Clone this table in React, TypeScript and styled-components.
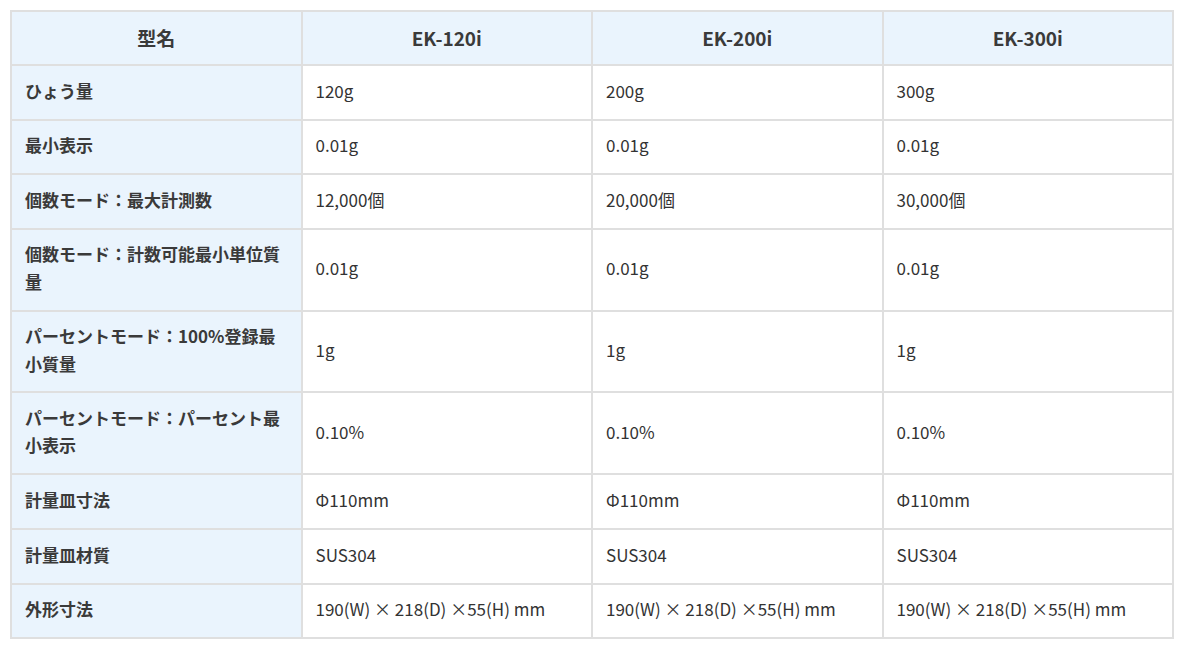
import styled, { createGlobalStyle } from "styled-components";

const GlobalStyle = createGlobalStyle`
  html, body {
    margin: 0;
    padding: 0;
    background: #ffffff;
  }
  body {
    font-family: "Noto Sans CJK JP", "Noto Sans", sans-serif;
    color: #333333;
  }
`;

const MODELS = ["EK-120i", "EK-200i", "EK-300i"];

const ROWS: { label: string; values: string[] }[] = [
  { label: "ひょう量", values: ["120g", "200g", "300g"] },
  { label: "最小表示", values: ["0.01g", "0.01g", "0.01g"] },
  { label: "個数モード：最大計測数", values: ["12,000個", "20,000個", "30,000個"] },
  { label: "個数モード：計数可能最小単位質量", values: ["0.01g", "0.01g", "0.01g"] },
  { label: "パーセントモード：100%登録最小質量", values: ["1g", "1g", "1g"] },
  { label: "パーセントモード：パーセント最小表示", values: ["0.10%", "0.10%", "0.10%"] },
  { label: "計量皿寸法", values: ["Φ110mm", "Φ110mm", "Φ110mm"] },
  { label: "計量皿材質", values: ["SUS304", "SUS304", "SUS304"] },
  {
    label: "外形寸法",
    values: [
      "190(W) × 218(D) ×55(H) mm",
      "190(W) × 218(D) ×55(H) mm",
      "190(W) × 218(D) ×55(H) mm",
    ],
  },
];

const Page = styled.div`
  padding: 10px 0 0 10px;
`;

const SpecTable = styled.table`
  width: 1164px;
  border-collapse: collapse;
  table-layout: fixed;
  border: 2px solid #dfdfdf;
`;

const HeadCell = styled.th`
  background: #eaf4fd;
  border: 2px solid #dfdfdf;
  padding: 12px 13px 13px;
  font-size: 19px;
  line-height: 27px;
  font-weight: 700;
  color: #3a3a3a;
  text-align: center;
`;

const LabelCell = styled.th`
  background: #eaf4fd;
  border: 2px solid #dfdfdf;
  padding: 10.6px 13px 14.7px;
  font-size: 17px;
  line-height: 27.3px;
  font-weight: 700;
  color: #3a3a3a;
  text-align: left;
  vertical-align: middle;
`;

const ValueCell = styled.td`
  background: #ffffff;
  border: 2px solid #dfdfdf;
  padding: 10.6px 13px 14.7px;
  font-size: 17px;
  line-height: 27.3px;
  font-weight: 400;
  color: #333333;
  vertical-align: middle;
`;

export default function App() {
  return (
    <Page>
      <GlobalStyle />
      <SpecTable>
        <thead>
          <tr>
            <HeadCell>型名</HeadCell>
            {MODELS.map((m) => (
              <HeadCell key={m}>{m}</HeadCell>
            ))}
          </tr>
        </thead>
        <tbody>
          {ROWS.map((row) => (
            <tr key={row.label}>
              <LabelCell>{row.label}</LabelCell>
              {row.values.map((v, i) => (
                <ValueCell key={i}>{v}</ValueCell>
              ))}
            </tr>
          ))}
        </tbody>
      </SpecTable>
    </Page>
  );
}
